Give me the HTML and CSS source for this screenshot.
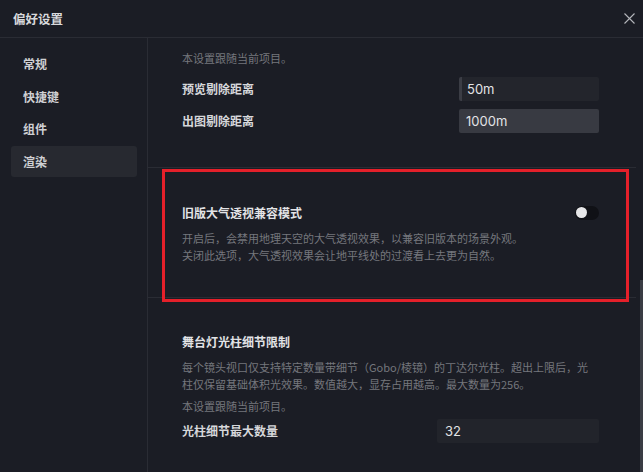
FILE: index.html
```html
<!DOCTYPE html>
<html lang="zh-CN">
<head>
<meta charset="utf-8">
<title>偏好设置</title>
<link rel="stylesheet" href="styles.css">
</head>
<body>
<div class="dialog">
  <header class="dialog-header">
    <h1 class="dialog-title">偏好设置</h1>
    <button class="close-btn" aria-label="关闭">
      <svg width="11" height="11" viewBox="0 0 11 11"><path d="M0.5 0.5 L10.5 10.5 M10.5 0.5 L0.5 10.5" stroke="#b4b6bb" stroke-width="1.1" fill="none"/></svg>
    </button>
  </header>
  <div class="dialog-body">
    <nav class="sidebar">
      <div class="nav-item">常规</div>
      <div class="nav-item">快捷键</div>
      <div class="nav-item">组件</div>
      <div class="nav-item active">渲染</div>
    </nav>
    <main class="content">
      <section class="section section-first">
        <p class="note note-top">本设置跟随当前项目。</p>
        <div class="row">
          <span class="label">预览剔除距离</span>
          <div class="input input-focus">50m</div>
        </div>
        <div class="row">
          <span class="label">出图剔除距离</span>
          <div class="input input-hover">1000m</div>
        </div>
      </section>
      <section class="section section-highlight">
        <div class="title-row">
          <h2 class="section-title">旧版大气透视兼容模式</h2>
          <span class="toggle"><span class="knob"></span></span>
        </div>
        <p class="desc">开启后，会禁用地理天空的大气透视效果，以兼容旧版本的场景外观。<br>关闭此选项，大气透视效果会让地平线处的过渡看上去更为自然。</p>
        <div class="highlight-box"></div>
      </section>
      <section class="section section-last">
        <h2 class="section-title">舞台灯光柱细节限制</h2>
        <p class="desc desc-wrap">每个镜头视口仅支持特定数量带细节（Gobo/棱镜）的丁达尔光柱。超出上限后，光柱仅保留基础体积光效果。数值越大，显存占用越高。最大数量为256。</p>
        <p class="note note-mid">本设置跟随当前项目。</p>
        <div class="row">
          <span class="label">光柱细节最大数量</span>
          <div class="input input-wide">32</div>
        </div>
      </section>
      <div class="scroll-thumb"></div>
    </main>
  </div>
</div>
</body>
</html>
```

FILE: styles.css
```css
* { box-sizing: border-box; margin: 0; padding: 0; }
html, body { width: 643px; height: 472px; overflow: hidden; }
body {
  background: #1b1d25;
  font-family: "Noto Sans CJK SC", "Noto Sans", sans-serif;
  color: #dcdde0;
}
.dialog { width: 643px; height: 472px; display: flex; flex-direction: column; background: #1b1d25; }
.dialog-header {
  height: 38px;
  flex: none;
  display: flex;
  align-items: center;
  justify-content: space-between;
  padding: 0 7px 0 13px;
  border-bottom: 1px solid #2a2c34;
}
.dialog-title { font-size: 12.5px; font-weight: 600; color: #d8d9dc; line-height: 18px; }
.close-btn {
  background: none; border: none; width: 14px; height: 14px;
  display: flex; align-items: center; justify-content: center;
}
.dialog-body { flex: 1; display: flex; min-height: 0; }
.sidebar {
  width: 148px;
  flex: none;
  border-right: 1px solid #2a2c34;
  padding: 10px 10px 0 11px;
  display: flex;
  flex-direction: column;
  gap: 1px;
}
.nav-item {
  height: 31.5px;
  line-height: 31px;
  padding-left: 12px;
  font-size: 12px;
  font-weight: 600;
  color: #cfd0d3;
  border-radius: 3px;
  width: 126px;
}
.nav-item.active { background: #272930; }
.content { flex: 1; position: relative; overflow: hidden; }
.section {
  position: relative;
  padding-left: 34px;
  padding-right: 44px;
  border-bottom: 1px solid #2a2c34;
  margin-right: 7px;
}
.section-first { padding-top: 12px; padding-bottom: 34px; }
.section-highlight { padding-top: 36px; padding-bottom: 33px; }
.section-last { padding-top: 35px; border-bottom: none; margin-right: 0; padding-right: 44px; }
.note { font-size: 11px; line-height: 17px; color: #75777d; }
.note-top { margin-bottom: 9.5px; }
.note-mid { margin-top: 5px; margin-bottom: 4px; }
.row { display: flex; align-items: center; justify-content: space-between; height: 24px; }
.row + .row { margin-top: 8px; }
.section-first .row { margin-right: -7px; }
.label { font-size: 12px; font-weight: 600; color: #d6d7da; }
.input {
  width: 140px; height: 24px;
  background: #23252c;
  border-radius: 2px;
  font-family: "Inter", "Roboto", sans-serif;
  font-size: 13px;
  color: #e2e3e6;
  line-height: 24px;
  padding-left: 8px;
}
.input-focus { border-left: 3px solid #3b3d45; padding-left: 5px; }
.input-hover { background: #383a42; padding-left: 7px; }
.input-wide { width: 162px; background: #22242b; }
.title-row { display: flex; align-items: center; justify-content: space-between; height: 18px; margin-right: -7px; }
.section-title { font-size: 12px; font-weight: 700; color: #e2e3e6; line-height: 18px; }
.toggle {
  width: 24px; height: 14px; border-radius: 7px;
  background: #101116;
  display: flex; align-items: center; padding-left: 1px;
}
.knob { width: 11px; height: 11px; border-radius: 50%; background: #e6e6e8; }
.desc { font-size: 11px; line-height: 17px; color: #75777d; margin-top: 8px; }
.desc-wrap { max-width: 410px; }
.highlight-box {
  position: absolute;
  left: 14px; top: 1px;
  width: 467px; height: 133px;
  border: 3px solid #e5202a;
  pointer-events: none;
}
.scroll-thumb {
  position: absolute;
  right: 0; top: 242px;
  width: 3px; height: 200px;
  background: #3a3c44;
}
```
